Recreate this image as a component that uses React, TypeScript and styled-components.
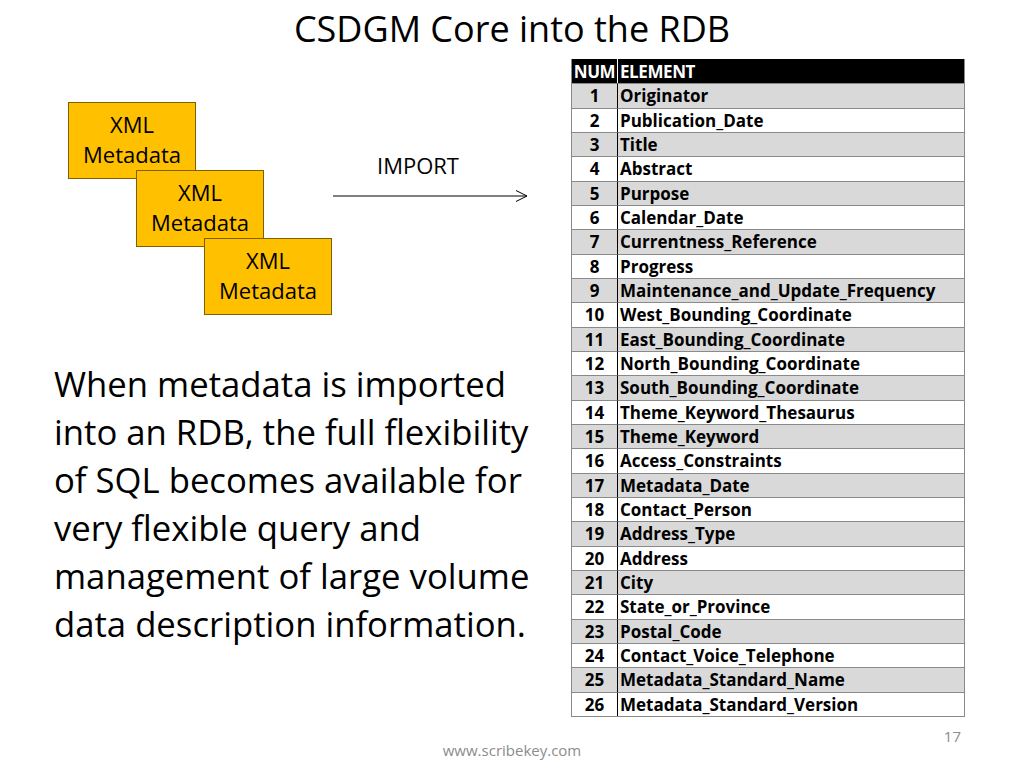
import React from "react";
import styled, { createGlobalStyle } from "styled-components";

const GlobalStyle = createGlobalStyle`
  html, body { margin: 0; padding: 0; background: #ffffff; }
  body { font-family: "Open Sans", "Liberation Sans", sans-serif; color: #000; }
`;

const Slide = styled.div`
  width: 1024px;
  height: 768px;
  display: flex;
  flex-direction: column;
  background: #ffffff;
  overflow: hidden;
`;

const Title = styled.h1`
  margin: 0;
  height: 59px;
  display: flex;
  align-items: center;
  justify-content: center;
  font-family: "Open Sans", sans-serif;
  font-weight: 400;
  font-size: 36px;
  color: #000;
  padding-bottom: 3px;
  box-sizing: border-box;
`;

const Main = styled.div`
  display: grid;
  grid-template-columns: 571px 394px;
  height: 657px;
`;

const LeftCol = styled.div`
  display: flex;
  flex-direction: column;
`;

const Diagram = styled.div`
  position: relative;
  height: 301px;
`;

const MetaBox = styled.div<{ $left: number; $top: number }>`
  position: absolute;
  left: ${(p) => p.$left}px;
  top: ${(p) => p.$top}px;
  width: 128px;
  height: 77px;
  box-sizing: border-box;
  background: #ffc000;
  border: 1px solid #7f6000;
  display: flex;
  flex-direction: column;
  align-items: center;
  justify-content: center;
  font-size: 22px;
  line-height: 30px;
  color: #000;
  padding-bottom: 3px;
`;

const ImportLabel = styled.div`
  position: absolute;
  left: 377px;
  top: 93px;
  font-size: 22px;
  line-height: 26px;
  color: #000;
`;

const Arrow = styled.svg`
  position: absolute;
  left: 333px;
  top: 131px;
`;

const Paragraph = styled.p`
  margin: 0;
  padding-left: 54px;
  font-size: 34.7px;
  line-height: 48px;
  color: #000;
  white-space: nowrap;
`;

const Table = styled.div`
  display: grid;
  grid-template-columns: 46px 1fr;
  grid-template-rows: repeat(27, minmax(0, 1fr));
  border-left: 1px solid #8a8a8a;
  border-right: 1px solid #8a8a8a;
  border-bottom: 1px solid #8a8a8a;
  box-sizing: border-box;
  height: 658px;
  font-family: "Open Sans", sans-serif;
  font-weight: 700;
  font-size: 17px;
  line-height: 1;
`;

const HeadCell = styled.div<{ $num?: boolean }>`
  background: #000;
  color: #fff;
  display: flex;
  align-items: center;
  justify-content: ${(p) => (p.$num ? "center" : "flex-start")};
  padding-left: ${(p) => (p.$num ? "0" : "2px")};
  border-right: ${(p) => (p.$num ? "1px solid #fff" : "none")};
  box-sizing: border-box;
  font-size: 17px;
  letter-spacing: -0.4px;
  white-space: nowrap;
  overflow: hidden;
`;

const Cell = styled.div<{ $num?: boolean; $shade: boolean }>`
  background: ${(p) => (p.$shade ? "#d9d9d9" : "#ffffff")};
  border-top: 1px solid #8a8a8a;
  border-right: ${(p) => (p.$num ? "1px solid #000" : "none")};
  box-sizing: border-box;
  display: flex;
  align-items: center;
  justify-content: ${(p) => (p.$num ? "center" : "flex-start")};
  padding-left: ${(p) => (p.$num ? "0" : "2px")};
  color: #000;
  white-space: nowrap;
  overflow: hidden;
`;

const Footer = styled.div`
  flex: 1;
  display: grid;
  grid-template-columns: 1fr auto 1fr;
  color: #8c8c8c;
  font-size: 15px;
`;

const Url = styled.div`
  grid-column: 2;
  align-self: start;
  padding-top: 24px;
`;

const PageNum = styled.div`
  grid-column: 3;
  justify-self: end;
  padding-right: 63px;
  padding-top: 10px;
`;

const elements = [
  "Originator",
  "Publication_Date",
  "Title",
  "Abstract",
  "Purpose",
  "Calendar_Date",
  "Currentness_Reference",
  "Progress",
  "Maintenance_and_Update_Frequency",
  "West_Bounding_Coordinate",
  "East_Bounding_Coordinate",
  "North_Bounding_Coordinate",
  "South_Bounding_Coordinate",
  "Theme_Keyword_Thesaurus",
  "Theme_Keyword",
  "Access_Constraints",
  "Metadata_Date",
  "Contact_Person",
  "Address_Type",
  "Address",
  "City",
  "State_or_Province",
  "Postal_Code",
  "Contact_Voice_Telephone",
  "Metadata_Standard_Name",
  "Metadata_Standard_Version",
];

const boxes = [
  { left: 68, top: 43 },
  { left: 136, top: 111 },
  { left: 204, top: 179 },
];

export default function App() {
  return (
    <>
      <GlobalStyle />
      <Slide>
        <Title>CSDGM Core into the RDB</Title>
        <Main>
          <LeftCol>
            <Diagram>
              {boxes.map((b, i) => (
                <MetaBox key={i} $left={b.left} $top={b.top}>
                  <span>XML</span>
                  <span>Metadata</span>
                </MetaBox>
              ))}
              <ImportLabel>IMPORT</ImportLabel>
              <Arrow width="196" height="12" viewBox="0 0 196 12">
                <line x1="0" y1="6" x2="194" y2="6" stroke="#000" strokeWidth="1" />
                <polyline points="183,0.5 194,6 183,11.5" fill="none" stroke="#000" strokeWidth="1" />
              </Arrow>
            </Diagram>
            <Paragraph>
              When metadata is imported
              <br />
              into an RDB, the full flexibility
              <br />
              of SQL becomes available for
              <br />
              very flexible query and
              <br />
              management of large volume
              <br />
              data description information.
            </Paragraph>
          </LeftCol>
          <Table>
            <HeadCell $num>NUM</HeadCell>
            <HeadCell>ELEMENT</HeadCell>
            {elements.map((el, i) => (
              <React.Fragment key={el}>
                <Cell $num $shade={i % 2 === 0}>{i + 1}</Cell>
                <Cell $shade={i % 2 === 0}>{el}</Cell>
              </React.Fragment>
            ))}
          </Table>
        </Main>
        <Footer>
          <Url>www.scribekey.com</Url>
          <PageNum>17</PageNum>
        </Footer>
      </Slide>
    </>
  );
}
